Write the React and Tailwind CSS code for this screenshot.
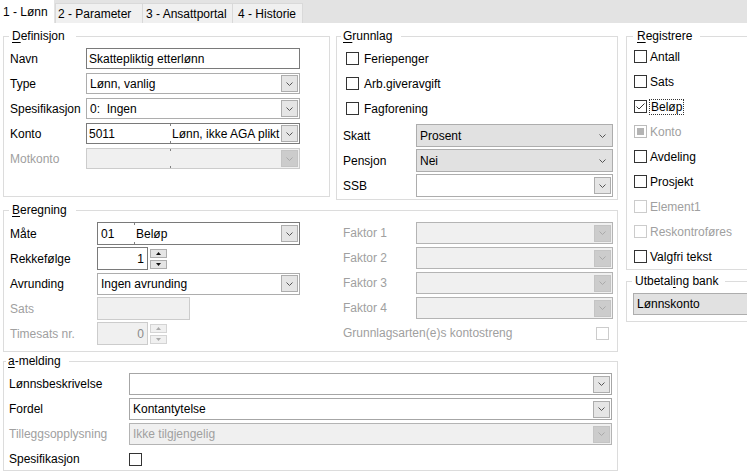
import React from "react";

const Chev = ({ c = "#555555" }) => (
  <svg width="7" height="4" viewBox="0 0 7 4" className="block">
    <path d="M0.5 0.5L3.5 3.5L6.5 0.5" fill="none" stroke={c} strokeWidth="1" />
  </svg>
);

function Btn({ dis }) {
  return (
    <div
      className={
        dis
          ? "mr-px flex h-[17px] w-[17px] shrink-0 items-center justify-center border border-[#c4c4c4] bg-[#cccccc]"
          : "mr-px flex h-[17px] w-[17px] shrink-0 items-center justify-center border border-[#adadad] bg-[#e5e5e5]"
      }
    >
      <Chev c={dis ? "#a9a9a9" : "#555555"} />
    </div>
  );
}

const Split = () => (
  <div className="flex w-px flex-col justify-between self-stretch">
    <div className="h-[2px] bg-[#808080]" />
    <div className="h-[2px] bg-[#808080]" />
  </div>
);

function Cb({ st = "off" }) {
  if (st === "dis")
    return <div className="h-[13px] w-[13px] shrink-0 border border-[#cccccc] bg-white" />;
  if (st === "ind")
    return (
      <div className="flex h-[13px] w-[13px] shrink-0 items-center justify-center border border-[#bcbcbc] bg-white">
        <div className="h-[7px] w-[7px] bg-[#b4b4b4]" />
      </div>
    );
  return (
    <div className="flex h-[13px] w-[13px] shrink-0 items-center justify-center border border-[#333333] bg-white">
      {st === "on" && (
        <svg width="11" height="11" viewBox="0 0 11 11" className="block">
          <path d="M1.5 5.5L4 8L9.5 2.5" fill="none" stroke="#333333" strokeWidth="1" />
        </svg>
      )}
    </div>
  );
}

const U = ({ children }) => <span className="underline underline-offset-2">{children}</span>;

function Tabs() {
  return (
    <div className="flex h-[23px] items-end bg-[#e3e3e3]">
      <div className="relative z-10 flex h-[24px] w-[54px] items-center self-start bg-white pb-[1px] pl-[3px]">1 - Lønn</div>
      <div className="ml-px flex h-[20px] w-[88px] items-center border-x border-t border-[#d9d9d9] bg-[#f0f0f0] pl-[2px]">2 - Parameter</div>
      <div className="flex h-[20px] w-[90px] items-center border-r border-t border-[#d9d9d9] bg-[#f0f0f0] pl-[3px]">3 - Ansattportal</div>
      <div className="flex h-[20px] w-[70px] items-center border-r border-t border-[#d9d9d9] bg-[#f0f0f0] pl-[5px]">4 - Historie</div>
    </div>
  );
}

function Definisjon() {
  return (
    <fieldset className="w-[327px] shrink-0 border border-[#dcdcdc] pb-[27px] pl-[6px] pr-[29px] pt-[5px]">
      <legend className="-ml-px pl-[3px] pr-[11px] leading-[14px]">
        <U>D</U>efinisjon
      </legend>
      <div className="flex flex-col gap-[4px]">
        <div className="flex h-[21px] items-center">
          <div className="w-[76px]">Navn</div>
          <div className="flex h-[21px] w-[214px] items-center border border-[#7a7a7a] bg-white pl-[2px]">Skattepliktig etterlønn</div>
        </div>
        <div className="flex h-[21px] items-center">
          <div className="w-[76px]">Type</div>
          <div className="flex h-[21px] w-[214px] items-center border border-[#adadad] bg-white">
            <span className="flex-1 pl-[3px]">Lønn, vanlig</span>
            <Btn />
          </div>
        </div>
        <div className="flex h-[21px] items-center">
          <div className="w-[76px]">Spesifikasjon</div>
          <div className="flex h-[21px] w-[214px] items-center border border-[#adadad] bg-white">
            <span className="flex-1 pl-[3px]">0:&nbsp; Ingen</span>
            <Btn />
          </div>
        </div>
        <div className="flex h-[21px] items-center">
          <div className="w-[76px]">Konto</div>
          <div className="flex h-[21px] w-[214px] items-center border border-[#7a7a7a] bg-white">
            <span className="w-[83px] pl-[2px]">5011</span>
            <Split />
            <span className="flex-1 overflow-hidden whitespace-nowrap pl-[1px]">Lønn, ikke AGA plikt</span>
            <Btn />
          </div>
        </div>
        <div className="flex h-[21px] items-center">
          <div className="w-[76px] text-[#a0a0a0]">Motkonto</div>
          <div className="flex h-[21px] w-[214px] items-center border border-[#cccccc] bg-[#f0f0f0]">
            <span className="w-[83px]" />
            <Split />
            <span className="flex-1" />
            <Btn dis />
          </div>
        </div>
      </div>
    </fieldset>
  );
}

function GraySel({ text, w = "w-[197px]" }) {
  return (
    <div className="flex h-[23px] w-[197px] items-center border border-[#adadad] bg-[#e1e1e1] pl-[3px] pr-[6px]">
      <span className="flex-1">{text}</span>
      <Chev />
    </div>
  );
}

function Grunnlag() {
  const checks = ["Feriepenger", "Arb.giveravgift", "Fagforening"];
  return (
    <fieldset className="w-[282px] shrink-0 border border-[#dcdcdc] pb-[2px] pl-[6px] pr-[4px] pt-[3px]">
      <legend className="-ml-[2px] pl-[2px] pr-[9px] leading-[14px]">
        <U>G</U>runnlag
      </legend>
      {checks.map((c) => (
        <div key={c} className="flex h-[25px] items-center gap-[5px] pl-[3px]">
          <Cb />
          <span>{c}</span>
        </div>
      ))}
      <div className="mt-[3px] flex flex-col gap-[2px]">
        <div className="flex h-[23px] items-center">
          <div className="w-[73px]">Skatt</div>
          <GraySel text="Prosent" />
        </div>
        <div className="flex h-[23px] items-center">
          <div className="w-[73px]">Pensjon</div>
          <GraySel text="Nei" />
        </div>
        <div className="flex h-[23px] items-center">
          <div className="w-[73px]">SSB</div>
          <div className="flex h-[23px] w-[197px] items-center border border-[#adadad] bg-white">
            <span className="flex-1" />
            <Btn />
          </div>
        </div>
      </div>
    </fieldset>
  );
}

function Spin({ dis }) {
  const cls = dis
    ? "flex h-[9px] w-[17px] items-center justify-center border border-[#d4d4d4] bg-[#f0f0f0]"
    : "flex h-[9px] w-[17px] items-center justify-center border border-[#adadad] bg-[#e5e5e5]";
  const c = dis ? "#a9a9a9" : "#111111";
  return (
    <div className="ml-[2px] flex flex-col gap-[2px]">
      <div className={cls}>
        <svg width="5" height="3" viewBox="0 0 5 3" className="block">
          <path d="M0 3L2.5 0L5 3Z" fill={c} />
        </svg>
      </div>
      <div className={cls}>
        <svg width="5" height="3" viewBox="0 0 5 3" className="block">
          <path d="M0 0L2.5 3L5 0Z" fill={c} />
        </svg>
      </div>
    </div>
  );
}

function DisSel() {
  return (
    <div className="flex h-[22px] w-[197px] items-center border border-[#b4b4b4] bg-[#f0f0f0]">
      <span className="flex-1" />
      <Btn dis />
    </div>
  );
}

function Beregning() {
  return (
    <fieldset className="mt-[3px] w-[615px] border border-[#dcdcdc] pb-[6px] pl-[6px] pr-[4px] pt-[5px]">
      <legend className="-ml-px pl-[3px] pr-[9px] leading-[14px]">
        <U>B</U>eregning
      </legend>
      <div className="flex">
        <div className="flex w-[290px] flex-col gap-[2px]">
          <div className="flex h-[23px] items-center">
            <div className="w-[87px]">Måte</div>
            <div className="flex h-[23px] w-[203px] items-center border border-[#7a7a7a] bg-white">
              <span className="w-[36px] pl-[3px]">01</span>
              <Split />
              <span className="flex-1 pl-[1px]">Beløp</span>
              <Btn />
            </div>
          </div>
          <div className="flex h-[23px] items-center">
            <div className="w-[87px]">Rekkefølge</div>
            <div className="flex h-[23px] w-[51px] items-center justify-end border border-[#7a7a7a] bg-white pr-[3px]">1</div>
            <Spin />
          </div>
          <div className="flex h-[23px] items-center">
            <div className="w-[87px]">Avrunding</div>
            <div className="flex h-[22px] w-[203px] items-center border border-[#adadad] bg-white">
              <span className="flex-1 pl-[3px]">Ingen avrunding</span>
              <Btn />
            </div>
          </div>
          <div className="flex h-[23px] items-center">
            <div className="w-[87px] text-[#a0a0a0]">Sats</div>
            <div className="h-[23px] w-[93px] border border-[#cccccc] bg-[#f0f0f0]" />
          </div>
          <div className="flex h-[23px] items-center">
            <div className="w-[87px] text-[#a0a0a0]">Timesats nr.</div>
            <div className="flex h-[23px] w-[51px] items-center justify-end border border-[#cccccc] bg-[#f0f0f0] pr-[3px] text-[#8a8a8a]">0</div>
            <Spin dis />
          </div>
        </div>
        <div className="ml-[43px] flex w-[270px] flex-col gap-[3px] text-[#a0a0a0]">
          {["Faktor 1", "Faktor 2", "Faktor 3", "Faktor 4"].map((f) => (
            <div key={f} className="flex h-[22px] items-center">
              <div className="w-[73px]">{f}</div>
              <DisSel />
            </div>
          ))}
          <div className="flex h-[22px] items-center justify-between pr-[4px]">
            <span>Grunnlagsarten(e)s kontostreng</span>
            <Cb st="dis" />
          </div>
        </div>
      </div>
    </fieldset>
  );
}

function AMelding() {
  return (
    <fieldset className="mt-[2px] w-[615px] border border-[#dcdcdc] pb-0 pl-[5px] pr-[5px] pt-[5px]">
      <legend className="-ml-[3px] pl-[2px] pr-[8px] leading-[14px]">
        <U>a</U>-melding
      </legend>
      <div className="flex flex-col gap-[3px]">
        <div className="flex h-[22px] items-center">
          <div className="w-[120px]">Lønnsbeskrivelse</div>
          <div className="flex h-[22px] w-[483px] items-center border border-[#a6a6a6] bg-white">
            <span className="flex-1" />
            <Btn />
          </div>
        </div>
        <div className="flex h-[22px] items-center">
          <div className="w-[120px]">Fordel</div>
          <div className="flex h-[22px] w-[483px] items-center border border-[#a6a6a6] bg-white">
            <span className="flex-1 pl-[3px]">Kontantytelse</span>
            <Btn />
          </div>
        </div>
        <div className="flex h-[22px] items-center">
          <div className="w-[120px] text-[#a0a0a0]">Tilleggsopplysning</div>
          <div className="flex h-[22px] w-[483px] items-center border border-[#b4b4b4] bg-[#f0f0f0]">
            <span className="flex-1 pl-[3px] text-[#a0a0a0]">Ikke tilgjengelig</span>
            <Btn dis />
          </div>
        </div>
        <div className="flex h-[22px] items-center">
          <div className="w-[120px]">Spesifikasjon</div>
          <Cb />
        </div>
      </div>
    </fieldset>
  );
}

function Registrere() {
  const items = [
    ["Antall", "off"],
    ["Sats", "off"],
    ["Beløp", "on"],
    ["Konto", "ind"],
    ["Avdeling", "off"],
    ["Prosjekt", "off"],
    ["Element1", "dis"],
    ["Reskontroføres", "dis"],
    ["Valgfri tekst", "off"],
  ];
  return (
    <fieldset className="w-[150px] border border-[#dcdcdc] pb-0 pl-[7px] pt-[1px]">
      <legend className="-ml-px pl-[4px] pr-[8px] leading-[14px]">
        <U>R</U>egistrere
      </legend>
      {items.map(([t, s]) => (
        <div key={t} className="flex h-[25px] items-center gap-[2px]">
          <Cb st={s} />
          <span
            className={
              s === "on"
                ? "border border-dotted border-[#333333] px-px leading-[14px]"
                : s === "ind" || s === "dis"
                ? "px-px text-[#a0a0a0]"
                : "px-px"
            }
          >
            {t}
          </span>
        </div>
      ))}
    </fieldset>
  );
}

function Utbetaling() {
  return (
    <fieldset className="mt-[4px] w-[150px] border border-[#dcdcdc] pb-[6px] pl-[6px] pt-[5px]">
      <legend className="-ml-px pl-[3px] pr-[7px] leading-[14px]">
        Utbetal<U>i</U>ng bank
      </legend>
      <div className="flex h-[22px] w-[140px] items-center border border-[#adadad] bg-[#e1e1e1] pl-[3px]">Lønnskonto</div>
    </fieldset>
  );
}

export default function App() {
  return (
    <div className="h-[472px] w-[747px] overflow-hidden bg-white font-['Liberation_Sans',Arial,sans-serif] text-[12px] leading-[14px] text-black">
      <Tabs />
      <div className="flex gap-[8px] pl-[3px] pt-[6px]">
        <div className="flex w-[615px] shrink-0 flex-col">
          <div className="flex items-start gap-[6px]">
            <Definisjon />
            <Grunnlag />
          </div>
          <Beregning />
          <AMelding />
        </div>
        <div className="flex w-[150px] shrink-0 flex-col">
          <Registrere />
          <Utbetaling />
        </div>
      </div>
    </div>
  );
}
